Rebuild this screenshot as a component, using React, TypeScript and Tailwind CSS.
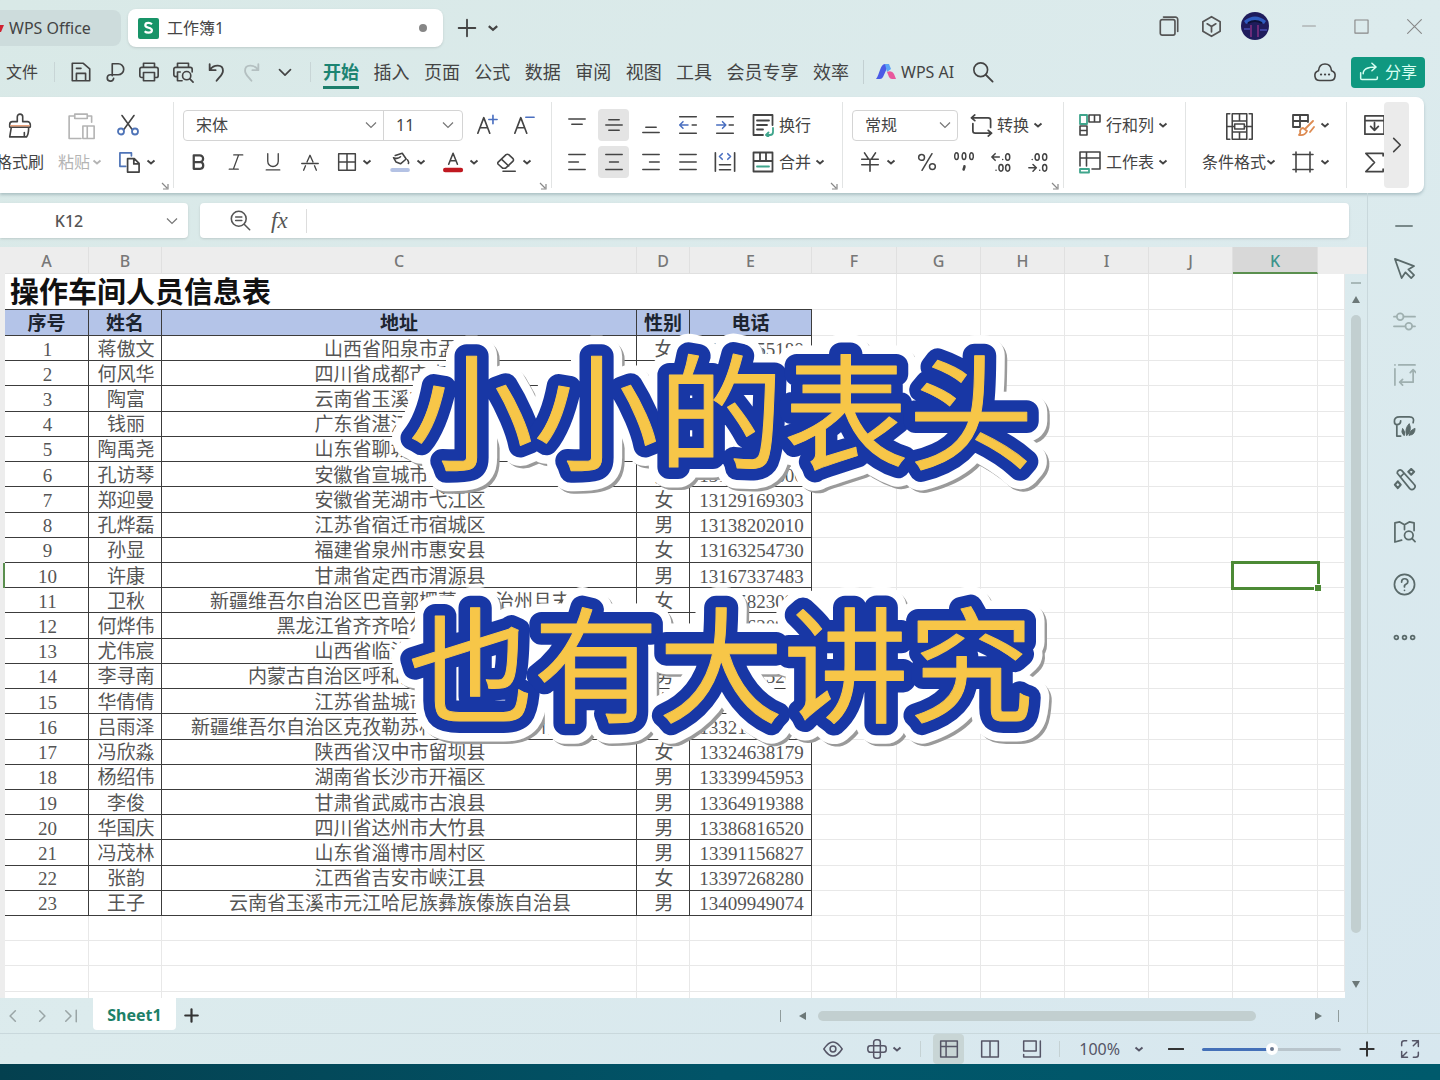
import { ReactNode, useState } from "react";
import clsx from "clsx";

type IconProps = { size?: number; className?: string; children: ReactNode };

const Icon = ({ size = 22, className, children }: IconProps) => (
  <svg
    width={size}
    height={size}
    viewBox="0 0 24 24"
    fill="none"
    stroke="currentColor"
    strokeWidth="1.8"
    strokeLinecap="round"
    strokeLinejoin="round"
    aria-hidden="true"
    className={clsx("shrink-0", className)}
  >
    {children}
  </svg>
);

const Chevron = ({ size = 10 }: { size?: number }) => (
  <svg
    width={size}
    height={size}
    viewBox="0 0 10 10"
    fill="none"
    stroke="currentColor"
    strokeWidth="1.9"
    className="shrink-0"
    aria-hidden="true"
  >
    <path d="M1.5 3.5 5 6.5 8.5 3.5" />
  </svg>
);

const WideChevron = ({ className }: { className?: string }) => (
  <svg
    width="12"
    height="12"
    viewBox="0 0 12 12"
    fill="none"
    stroke="#777"
    strokeWidth="1.2"
    className={clsx("pointer-events-none", className)}
    aria-hidden="true"
  >
    <path d="M1 3.5 6 8.5 11 3.5" />
  </svg>
);

type ToolProps = {
  label: string;
  className?: string;
  active?: boolean;
  children: ReactNode;
};

// square ribbon button, 37px pitch
const Tool = ({ label, className, active, children }: ToolProps) => (
  <button
    type="button"
    aria-label={label}
    className={clsx(
      "mx-[3px] flex h-8 w-[31px] items-center justify-center rounded",
      active && "bg-[#e4e4e4]",
      className
    )}
  >
    {children}
  </button>
);

// icon with a drop-down arrow
const DropTool = ({ label, className, children }: ToolProps) => (
  <button
    type="button"
    aria-label={label}
    className={clsx("flex h-8 items-center gap-[5px]", className)}
  >
    {children}
    <Chevron />
  </button>
);

const Launcher = () => (
  <button type="button" aria-label="更多设置" className="mr-1 mt-1 self-end text-[#888]">
    <svg width="8" height="8" viewBox="0 0 8 8" fill="none" stroke="currentColor" strokeWidth="1.2">
      <path d="M1 1l5 5M7 2v5H2" />
    </svg>
  </button>
);

type GroupProps = { className?: string; launcher?: boolean; children: ReactNode };

const Group = ({ className, launcher, children }: GroupProps) => (
  <div
    className={clsx(
      "flex shrink-0 flex-col border-r border-[#e2e4e4]",
      className
    )}
  >
    <div className="mt-[7px] flex flex-col gap-[5px]">{children}</div>
    {launcher ? <Launcher /> : null}
  </div>
);

const menus = ["开始", "插入", "页面", "公式", "数据", "审阅", "视图", "工具", "会员专享", "效率"];

const people = [
  ["蒋傲文", "山西省阳泉市盂县", "女", "13101655188"],
  ["何风华", "四川省成都市青羊区", "女", "13104472906"],
  ["陶富", "云南省玉溪市红塔区", "男", "13108265317"],
  ["钱丽", "广东省湛江市霞山区", "女", "13112590846"],
  ["陶禹尧", "山东省聊城市茌平区", "男", "13117734625"],
  ["孔访琴", "安徽省宣城市宣州区", "女", "13122841606"],
  ["郑迎曼", "安徽省芜湖市弋江区", "女", "13129169303"],
  ["孔烨磊", "江苏省宿迁市宿城区", "男", "13138202010"],
  ["孙显", "福建省泉州市惠安县", "女", "13163254730"],
  ["许康", "甘肃省定西市渭源县", "男", "13167337483"],
  ["卫秋", "新疆维吾尔自治区巴音郭楞蒙古自治州且末县", "女", "13175823096"],
  ["何烨伟", "黑龙江省齐齐哈尔市昂昂溪区", "男", "13184620975"],
  ["尤伟宸", "山西省临汾市尧都区", "男", "13196037428"],
  ["李寻南", "内蒙古自治区呼和浩特市土默特左旗", "男", "13303815264"],
  ["华倩倩", "江苏省盐城市亭湖区", "女", "13312758640"],
  ["吕雨泽", "新疆维吾尔自治区克孜勒苏柯尔克孜自治州乌恰县", "男", "13321640957"],
  ["冯欣淼", "陕西省汉中市留坝县", "女", "13324638179"],
  ["杨绍伟", "湖南省长沙市开福区", "男", "13339945953"],
  ["李俊", "甘肃省武威市古浪县", "男", "13364919388"],
  ["华国庆", "四川省达州市大竹县", "男", "13386816520"],
  ["冯茂林", "山东省淄博市周村区", "男", "13391156827"],
  ["张韵", "江西省吉安市峡江县", "女", "13397268280"],
  ["王子", "云南省玉溪市元江哈尼族彝族傣族自治县", "男", "13409949074"],
];

const columns = [
  { name: "A", width: "w-[84px]" },
  { name: "B", width: "w-[73px]" },
  { name: "C", width: "w-[475px]" },
  { name: "D", width: "w-[53px]" },
  { name: "E", width: "w-[122px]" },
  { name: "F", width: "w-[85px]" },
  { name: "G", width: "w-[84px]" },
  { name: "H", width: "w-[84px]" },
  { name: "I", width: "w-[84px]" },
  { name: "J", width: "w-[84px]" },
  { name: "K", width: "w-[85px]" },
];

const TitleBar = () => (
  <header className="flex h-[50px] shrink-0 items-center pt-1.5 text-[#444]">
    <button
      type="button"
      className="flex h-9 w-[121px] items-center gap-[5px] rounded-r-lg bg-[#cddcdc] text-base"
    >
      <svg width="4" height="10" viewBox="0 0 4 10" aria-hidden="true">
        <path d="M0 2h4L1 9H0z" fill="#d02030" />
      </svg>
      WPS Office
    </button>
    <div className="ml-[7px] flex h-[38px] w-[315px] items-center rounded-lg bg-white pl-2.5 pr-4 shadow-sm">
      <svg width="21" height="21" viewBox="0 0 21 21" aria-hidden="true">
        <rect width="21" height="21" rx="2" fill="#189468" />
        <path
          d="M14 6.2c-1-.9-2.200-1.300-3.500-1.300-2 0-3.200 1-3.200 2.300 0 3.400 6.600 1.700 6.600 5 0 1.500-1.300 2.500-3.400 2.500-1.500 0-2.900-.5-3.800-1.500"
          fill="none"
          stroke="#fff"
          strokeWidth="2.200"
        />
      </svg>
      <span className="ml-2 flex-1 text-base">工作簿1</span>
      <span className="h-2 w-2 rounded-full bg-[#868686]" />
    </div>
    <button type="button" aria-label="新建标签" className="ml-3.5">
      <Icon size={20}>
        <path d="M12 2v20M2 12h20" strokeWidth="2.200" />
      </Icon>
    </button>
    <button type="button" aria-label="标签列表" className="ml-2.5">
      <Chevron size={12} />
    </button>
    <div className="mb-1 ml-auto flex items-center pr-[18px] text-[#555]">
      <button type="button" aria-label="工作区" className="mr-5">
        <Icon size={22}>
          <rect x="2.500" y="5" width="16" height="17" rx="2" />
          <path d="M6 2.300h13a2.500 2.500 0 0 1 2.500 2.500V18" />
        </Icon>
      </button>
      <button type="button" aria-label="应用" className="mr-[18px]">
        <Icon size={23}>
          <path d="M12 1.800 21 7v10l-9 5.200L3 17V7zM7.500 9.200 12 12l4.500-2.800M12 12v5.500" />
        </Icon>
      </button>
      <button type="button" aria-label="账户" className="mr-[33px]">
        <svg width="28" height="28" viewBox="0 0 28 28">
          <circle cx="14" cy="14" r="14" fill="#1f1c5c" />
          <path d="M3 9q11-9 22 0l-2 3q-9-6-18 0z" fill="#2f5cc0" />
          <path d="M7 11q7-4 14 0" stroke="#0d1238" strokeWidth="2" fill="none" />
          <path d="M10 13v12M17 13v12" stroke="#6b2a78" strokeWidth="2" />
          <path d="M3 17h6M19 18h7" stroke="#3b3f9b" strokeWidth="2" />
        </svg>
      </button>
      <button type="button" aria-label="最小化" className="mr-[38px] text-[#999]">
        <Icon size={14}>
          <path d="M1 12h22" />
        </Icon>
      </button>
      <button type="button" aria-label="最大化" className="mr-[38px] text-[#888]">
        <Icon size={15}>
          <rect x="1.500" y="1.500" width="21" height="21" />
        </Icon>
      </button>
      <button type="button" aria-label="关闭" className="text-[#888]">
        <Icon size={15}>
          <path d="M1 1l22 22M23 1 1 23" />
        </Icon>
      </button>
    </div>
  </header>
);

const MenuBar = () => {
  const [current, setCurrent] = useState("开始");

  return (
    <div className="flex h-[47px] shrink-0 items-center pb-[3px] text-[#444]">
      <button type="button" className="ml-1.5 text-base">
        文件
      </button>
      <span className="ml-4 mr-[15px] h-5 w-px bg-[#c8d5d6]" />
      <div className="flex items-center gap-3">
        <button type="button" aria-label="保存">
          <Icon>
            <path d="M2.500 2.500h12l7 6V21.500h-19zM7 21v-7.500h10V21M7 8h5" />
          </Icon>
        </button>
        <button type="button" aria-label="输出为PDF">
          <Icon>
            <path d="M9 16V3h6.500a5.500 5.500 0 0 1 0 12H7a3.500 3.500 0 1 0 3.500 4" />
          </Icon>
        </button>
        <button type="button" aria-label="打印">
          <Icon>
            <path d="M6 7V2.500h12V7M5.500 18H4a2 2 0 0 1-2-2V9a2 2 0 0 1 2-2h16a2 2 0 0 1 2 2v7a2 2 0 0 1-2 2h-1.500M6 12.500h12v9H6z" />
          </Icon>
        </button>
        <button type="button" aria-label="打印预览">
          <Icon>
            <path d="M6 7V2.500h12V7M5 17H4a2 2 0 0 1-2-2V9a2 2 0 0 1 2-2h16a2 2 0 0 1 2 2v3M9 12H6v9.500h5" />
            <circle cx="16" cy="16" r="4.500" />
            <path d="m19.500 19.500 3.500 3.500" />
          </Icon>
        </button>
        <button type="button" aria-label="撤销">
          <Icon>
            <path d="M4 3.500V10h6.500M4.500 9.500c4-6 14-6 14 1 0 4-3 6-7 11" strokeWidth="2" />
          </Icon>
        </button>
        <button type="button" aria-label="恢复" className="text-[#b4c0c1]">
          <Icon>
            <path d="M20 3.500V10h-6.500M19.500 9.500c-4-6-14-6-14 1 0 4 3 6 7 11" strokeWidth="2" />
          </Icon>
        </button>
        <button type="button" aria-label="更多命令">
          <Icon>
            <path d="m6 9.500 6 6 6-6" />
          </Icon>
        </button>
      </div>
      <span className="ml-3.5 mr-3 h-5 w-px bg-[#c8d5d6]" />
      <nav className="flex w-[526px] items-center justify-between text-lg leading-6">
        {menus.map((name) => (
          <button
            type="button"
            key={name}
            onClick={() => setCurrent(name)}
            className={clsx(
              "border-b-[3px] pb-0.5 pt-[5px] whitespace-nowrap",
              name === current
                ? "border-[#1c7d6b] font-bold text-[#1c8472]"
                : "border-transparent"
            )}
          >
            {name}
          </button>
        ))}
      </nav>
      <span className="ml-3.5 mr-3 h-6 w-px bg-[#c3d0d2]" />
      <button type="button" className="flex items-center gap-1 text-base">
        <svg width="21" height="18" viewBox="0 0 21 18" aria-hidden="true">
          <path d="M0 16C4 11 4 1 9 1h4L7 14q-1 2-3 2z" fill="#4a5be6" />
          <path d="M9 1h4l2 5-4 3z" fill="#5ba4f5" />
          <path d="M11 9q5-2 7 2l2 5h-4q-2 0-3-2z" fill="#e8589c" />
        </svg>
        WPS AI
      </button>
      <button type="button" aria-label="搜索" className="ml-[18px]">
        <Icon size={22}>
          <circle cx="9.500" cy="9.500" r="7.500" />
          <path d="m15 15 7.500 7.500" strokeWidth="2" />
        </Icon>
      </button>
      <button type="button" aria-label="云端" className="ml-auto">
        <Icon size={24}>
          <path d="M7 20.500a5 5 0 0 1-1.500-9.800C6 6 9 4 12 4s6 2 6.500 6.700A5 5 0 0 1 17 20.500z" strokeWidth="1.600" />
          <path d="M8 14.500h.1M12 14.500h.1M16 14.500h.1" strokeWidth="2.200" />
        </Icon>
      </button>
      <button
        type="button"
        className="ml-3.5 mr-[15px] flex h-[31px] w-[74px] items-center justify-center gap-1.5 rounded bg-[#109880] text-base text-[#d8fff2]"
      >
        <Icon size={20}>
          <path d="M2 13v6.500a1.500 1.500 0 0 0 1.500 1.500h17a1.500 1.500 0 0 0 1.500-1.500V18M5 14c0-6 6-8 15-8M15.500 1.500 20.500 6l-5 4.500" />
        </Icon>
        分享
      </button>
    </div>
  );
};

const Ribbon = () => (
  <div className="mr-4 flex h-24 shrink-0 overflow-hidden rounded-r-lg bg-white py-[5px] text-base text-[#444] shadow-[0_2px_3px_rgba(90,120,130,0.35)]">
    <Group className="w-[174px]" launcher>
      <div className="flex">
        <button type="button" className="flex w-[44px] flex-col items-end">
          <span className="flex h-[37px] w-[47px] items-start pl-2.5">
            <Icon size={26} className="mt-1">
              <path d="M9.500 8V3.500a2.500 2.500 0 0 1 5 0V8H19a2.500 2.500 0 0 1 2.500 2.500V13h-19v-2.500A2.500 2.500 0 0 1 5 8zM4 13 2.500 22H18q2-2 2-9M16 18v4" strokeWidth="1.500" />
              <path d="M3.500 11.800h17" stroke="#e8a07a" strokeWidth="1.300" />
            </Icon>
          </span>
          <span className="leading-8 whitespace-nowrap">格式刷</span>
        </button>
        <button type="button" className="ml-3.5 flex w-[46px] flex-col text-[#b4b4b4]">
          <span className="flex h-[37px] items-start pl-2">
            <Icon size={30} className="mt-0.5">
              <path d="M7 4H2.500v18H12M17 4h3.500v5M7 2.500h10V6H7zM13.500 12h9v10h-9zM17 12v10" strokeWidth="1.300" />
            </Icon>
          </span>
          <span className="flex items-center gap-0.5 leading-8 whitespace-nowrap">
            粘贴 <Chevron />
          </span>
        </button>
        <div className="ml-3 flex flex-col gap-[5px]">
          <button type="button" aria-label="剪切" className="flex h-8 items-center">
            <Icon size={24}>
              <path d="M6 2.500 16.500 17M18 2.500 7.500 17" strokeWidth="1.600" />
              <circle cx="5" cy="18.500" r="3" stroke="#4f74b8" />
              <circle cx="19" cy="18.500" r="3" stroke="#4f74b8" />
            </Icon>
          </button>
          <DropTool label="复制" className="ml-0.5">
            <Icon size={23}>
              <path d="M8 16H2V2h12v3" stroke="#4f74b8" />
              <path d="M10 8h7l5 5v9H10zM16.500 8v5.500H22" />
            </Icon>
          </DropTool>
        </div>
      </div>
    </Group>

    <Group className="w-[378px]" launcher>
      <div className="ml-[9px] flex h-8 items-center">
        <div className="flex h-[31px] items-center rounded border border-[#d4d4d4]">
          <label className="relative flex h-full w-[200px] items-center border-r border-[#d4d4d4]">
            <select aria-label="字体" className="h-full w-full appearance-none pl-3 outline-none">
              <option>宋体</option>
              <option>黑体</option>
            </select>
            <WideChevron className="absolute right-1.5" />
          </label>
          <label className="relative flex h-full w-[78px] items-center">
            <select aria-label="字号" className="h-full w-full appearance-none pl-3 outline-none">
              <option>11</option>
              <option>12</option>
            </select>
            <WideChevron className="absolute right-2" />
          </label>
        </div>
        <Tool label="增大字号" className="ml-2">
          <Icon size={22}>
            <path d="m2 21 6.500-17L15 21M4.500 15h8" />
            <path d="M18.500 1.500v9M14 6h9" stroke="#4a6fc0" />
          </Icon>
        </Tool>
        <Tool label="减小字号">
          <Icon size={22}>
            <path d="m2 21 6.500-17L15 21M4.500 15h8" />
            <path d="M14 3.500h9" stroke="#4a6fc0" />
          </Icon>
        </Tool>
      </div>
      <div className="ml-1.5 flex">
        <Tool label="加粗">
          <Icon size={18}>
            <path d="M5 3h8a4.400 4.400 0 0 1 0 9H5zM5 12h9a4.600 4.600 0 0 1 0 9H5z" strokeWidth="3" />
          </Icon>
        </Tool>
        <Tool label="倾斜">
          <Icon size={18}>
            <path d="M9 2.500h12M3 21.500h12M15.500 2.500l-7 19" />
          </Icon>
        </Tool>
        <Tool label="下划线">
          <Icon size={18}>
            <path d="M5 1v10a7 7 0 0 0 14 0V1M3 22.500h18" />
          </Icon>
        </Tool>
        <Tool label="删除线">
          <Icon size={18}>
            <path d="M8 12 12 3l4 9M1 14h22M6 17l-2.500 6M18 17l2.500 6" />
          </Icon>
        </Tool>
        <DropTool label="边框" className="w-[53px] pl-[9px]">
          <Icon size={20}>
            <path d="M2 2h20v20H2zM12 2v20M2 12h20" />
          </Icon>
        </DropTool>
        <DropTool label="填充颜色" className="w-[53px] pl-[9px]">
          <Icon size={21}>
            <path d="M6 4 14 1.500 18.500 8 12 13.500 7 11.500 4 6.500q5 2 8-1M20 9q2 3 1 4" />
            <path d="M2.500 20.500h18" stroke="#b4c2e4" strokeWidth="4.500" />
          </Icon>
        </DropTool>
        <DropTool label="字体颜色" className="w-[53px] pl-[9px]">
          <Icon size={21}>
            <path d="m6.500 14 5-12.500 5 12.500M8 10h7" />
            <path d="M2.500 20.500h18" stroke="#c01820" strokeWidth="5" />
          </Icon>
        </DropTool>
        <DropTool label="清除" className="w-[53px] pl-[9px]">
          <Icon size={21}>
            <path d="m7.500 18.500-5-4.500a2 2 0 0 1 0-2.500l9-8.500q1.500-1 3 0l5 4.500q1 1.500 0 3l-8.500 8zM6.500 8.500l8 7.500M8 22h14" />
          </Icon>
        </DropTool>
      </div>
    </Group>

    <Group className="w-[291px]" launcher>
      <div className="ml-1.5 flex">
        <Tool label="顶端对齐">
          <Icon size={18}>
            <path d="M1 4h22M5 11h14" />
          </Icon>
        </Tool>
        <Tool label="垂直居中" active>
          <Icon size={18}>
            <path d="M5 5h14M1 12h22M5 19h14" />
          </Icon>
        </Tool>
        <Tool label="底端对齐">
          <Icon size={18}>
            <path d="M5 15h14M1 22h22" />
          </Icon>
        </Tool>
        <Tool label="减少缩进">
          <Icon size={20}>
            <path d="M2 2h20M17 12h5M2 22h20" />
            <path d="M12 12H2m4-4-4 4 4 4" stroke="#4a6fc0" />
          </Icon>
        </Tool>
        <Tool label="增加缩进">
          <Icon size={20}>
            <path d="M2 2h20M17 12h5M2 22h20" />
            <path d="M2 12h11m-4-4 4 4-4 4" stroke="#4a6fc0" />
          </Icon>
        </Tool>
        <button type="button" className="ml-2 flex items-center gap-1 whitespace-nowrap">
          <Icon size={24}>
            <path d="M21.500 12V2h-19v20H12M6 7.500h12M6 12h10M6 16.500h6" />
            <path d="M22 15v4q0 3-3 3h-3m1.500-2.500L15 22l2.500 2" stroke="#3fa58c" />
          </Icon>
          换行
        </button>
      </div>
      <div className="ml-1.5 flex">
        <Tool label="左对齐">
          <Icon size={18}>
            <path d="M1 2h22M1 12h13M1 22h22" />
          </Icon>
        </Tool>
        <Tool label="水平居中" active>
          <Icon size={18}>
            <path d="M1 2h22M6 12h12M1 22h22" />
          </Icon>
        </Tool>
        <Tool label="右对齐">
          <Icon size={18}>
            <path d="M1 2h22M10 12h13M1 22h22" />
          </Icon>
        </Tool>
        <Tool label="两端对齐">
          <Icon size={18}>
            <path d="M1 2h22M1 12h22M1 22h22" />
          </Icon>
        </Tool>
        <Tool label="分散对齐">
          <Icon size={22}>
            <path d="M1.500 2v20M22.500 2v20M6 15h12M6 20.500h12" />
            <path d="M9 3 6 6l3 3M15 3l3 3-3 3" stroke="#4a6fc0" />
          </Icon>
        </Tool>
        <button type="button" className="ml-2 flex items-center gap-1 whitespace-nowrap">
          <Icon size={24}>
            <path d="M2.500 2.500h19v19h-19zM2.500 11h19M9 2.500V11M15 2.500V11" />
            <path d="M6 16.500h12" stroke="#3fa58c" />
          </Icon>
          合并 <Chevron />
        </button>
      </div>
    </Group>

    <Group className="w-[221px]" launcher>
      <div className="ml-[9px] flex h-8 items-center">
        <label className="relative flex h-[31px] w-[106px] items-center rounded border border-[#d4d4d4]">
          <select aria-label="数字格式" className="h-full w-full appearance-none pl-3 outline-none">
            <option>常规</option>
            <option>数值</option>
          </select>
          <WideChevron className="absolute right-1.5" />
        </label>
        <button type="button" className="ml-3 flex items-center gap-1 whitespace-nowrap">
          <Icon size={23}>
            <path d="M5 1 1.500 4 5 7M2 4h17q2.500 0 2.500 2.500V14M3 10v7.500Q3 20 5.500 20H22M19 17l3.500 3-3.500 3" />
          </Icon>
          转换 <Chevron />
        </button>
      </div>
      <div className="ml-4 flex h-8 items-center">
        <DropTool label="货币" className="w-[49px]">
          <Icon size={22}>
            <path d="M6 2l4 6M18 2l-4 6M3 9h18M3 15h18M12 9v13" />
          </Icon>
        </DropTool>
        <Tool label="百分比">
          <Icon size={20}>
            <circle cx="5.500" cy="6.500" r="3.500" />
            <circle cx="18.500" cy="17.500" r="3.500" />
            <path d="M18 2 6 22" />
          </Icon>
        </Tool>
        <Tool label="千位分隔样式">
          <Icon size={20}>
            <ellipse cx="3" cy="5" rx="2.200" ry="4" />
            <ellipse cx="12" cy="5" rx="2.200" ry="4" />
            <ellipse cx="21" cy="5" rx="2.200" ry="4" />
            <path d="M12.500 17v1l-1 3" strokeWidth="3" />
          </Icon>
        </Tool>
        <Tool label="增加小数位数">
          <Icon size={20}>
            <path d="M10 6H1m4-4L1 6l4 4M14 9h.1M6 22h.1" />
            <ellipse cx="20" cy="6" rx="2.500" ry="4" />
            <ellipse cx="12" cy="19" rx="2.500" ry="4" />
            <ellipse cx="20" cy="19" rx="2.500" ry="4" />
          </Icon>
        </Tool>
        <Tool label="减少小数位数">
          <Icon size={20}>
            <path d="M1 19h9m-4-4 4 4-4 4M5 9h.1M14 22h.1" />
            <ellipse cx="11" cy="6" rx="2.500" ry="4" />
            <ellipse cx="20" cy="6" rx="2.500" ry="4" />
            <ellipse cx="20" cy="19" rx="2.500" ry="4" />
          </Icon>
        </Tool>
      </div>
    </Group>

    <Group className="w-[122px]">
      <button type="button" className="ml-3.5 flex h-8 items-center gap-1 whitespace-nowrap">
        <Icon size={24}>
          <path d="M11 2h11v7H11zM16.500 2v7M2 13h7v9H2zM2 17.500h7" strokeWidth="1.600" />
          <path d="M2 2h7v9H2z" stroke="#3fa58c" />
        </Icon>
        行和列 <Chevron />
      </button>
      <button type="button" className="ml-3.5 flex h-8 items-center gap-1 whitespace-nowrap">
        <Icon size={24}>
          <path d="M2 16V2h20v17h-8M2 8h20M8.500 2v14" strokeWidth="1.600" />
          <path d="M2 19h9v3.500H2z" stroke="#3fa58c" />
        </Icon>
        工作表 <Chevron />
      </button>
    </Group>

    <Group className="w-[161px]">
      <div className="ml-4 flex">
        <button type="button" className="flex flex-col items-center">
          <span className="flex h-[37px] items-start pt-[3px]">
            <Icon size={29}>
              <path d="M4 1.500H1.500v21H4M20 1.500h2.500v21H20M6 1.500h12v6H6zM6 16.500h12v6H6zM6 7.500v9M18 7.500v9M1.500 12H8M16 12h6.500M8 10h8v4H8zM12 1.500v6M12 16.500v6" strokeWidth="1.300" />
            </Icon>
          </span>
          <span className="flex items-center leading-8 whitespace-nowrap">
            条件格式 <Chevron />
          </span>
        </button>
        <div className="ml-3.5 flex flex-col gap-[5px]">
          <DropTool label="表格样式" className="ml-px">
            <Icon size={24}>
              <path d="M9 14H2V2h15v7M2 8h14M9 2v12" />
              <path d="m22 8-8 8M12 15l4 3q-2 5-8 4 2-2 1-4 1-3 3-3zM23 14l-4 5" stroke="#dd8b52" />
            </Icon>
          </DropTool>
          <DropTool label="单元格格式" className="ml-px">
            <Icon size={24}>
              <path d="M5 2v20M19 2v20M2 4.500h20M2 19.500h20" strokeWidth="1.600" />
            </Icon>
          </DropTool>
        </div>
      </div>
    </Group>

    <div className="mt-[7px] flex w-[37px] shrink-0 flex-col gap-[5px] overflow-hidden pl-4">
      <button type="button" aria-label="填充" className="flex h-8 items-center">
        <Icon size={23}>
          <path d="M2 2h20v5H2zM5 7H2v14h20V7M12 9v8m-4-4 4 4 4-4" />
        </Icon>
      </button>
      <button type="button" aria-label="求和" className="flex h-8 items-center">
        <Icon size={23}>
          <path d="M21 5V2.500H3L12 12l-9 9.500h18V19" />
        </Icon>
      </button>
    </div>
    <button
      type="button"
      aria-label="展开功能区"
      className="flex w-[25px] shrink-0 items-center justify-center rounded bg-[#ebebeb]"
    >
      <Icon size={16}>
        <path d="m7 2 10 10L7 22" strokeWidth="2.400" />
      </Icon>
    </button>
  </div>
);

const FormulaBar = () => (
  <div className="flex h-[54px] shrink-0 gap-3 pb-[9px] pr-[18px] pt-2.5 text-[#555]">
    <label className="relative flex w-[188px] items-center rounded-r bg-white shadow-sm">
      <input
        aria-label="名称框"
        defaultValue="K12"
        className="h-full w-full pr-[50px] text-center text-base font-medium outline-none"
      />
      <WideChevron className="absolute right-2.5" />
    </label>
    <div className="flex flex-1 items-center rounded bg-white pl-[30px] shadow-sm">
      <button type="button" aria-label="浏览公式结果">
        <Icon size={21}>
          <circle cx="10" cy="10" r="8.500" />
          <path d="m16.500 16.500 6 6M6.500 8h7M6.500 12h7" />
        </Icon>
      </button>
      <button
        type="button"
        aria-label="插入函数"
        className="ml-5 font-['Liberation_Serif',serif] text-[23px] leading-6 italic"
      >
        fx
      </button>
      <span className="ml-[18px] h-6 w-px bg-[#ddd]" />
      <input aria-label="编辑栏" className="h-full min-w-0 flex-1 px-2 outline-none" />
    </div>
  </div>
);

const Sheet = () => {
  const dark = "border-r border-b border-[#3c3c3c]";
  const light = "border-r border-b border-[#e8e8e8]";
  const blanks = ["F", "G", "H", "I", "J", "K", "L"];

  return (
    <div className="flex min-h-0 flex-1">
      <div className="min-w-0 flex-1 overflow-hidden bg-white">
        <table className="h-full w-full table-fixed border-separate border-spacing-0 text-center font-['Liberation_Serif','Noto_Sans_CJK_SC',serif] text-[19px] leading-5 text-[#555]">
          <colgroup>
            <col className="w-[5px]" />
            {columns.map((col) => (
              <col key={col.name} className={col.width} />
            ))}
            <col />
          </colgroup>
          <thead className="font-['Noto_Sans',sans-serif] text-base leading-5 text-[#777]">
            <tr className="h-[27px] bg-[#ededed]">
              <th className="p-0" />
              {columns.map((col) => (
                <th
                  key={col.name}
                  scope="col"
                  className={clsx(
                    "border-r border-b border-[#e0e0e0] p-0 pt-0.5 font-medium",
                    col.name === "K" && "border-b-2 border-b-[#5a8f4e] bg-[#d8d8d8] text-[#3c948c]"
                  )}
                >
                  {col.name}
                </th>
              ))}
              <th className="p-0" />
            </tr>
          </thead>
          <tbody>
            <tr className="h-9">
              <td className="bg-[#ededed] p-0" />
              <td
                colSpan={5}
                className="border-b border-[#3c3c3c] p-0 pl-[5px] pt-[3px] text-left text-[29px] leading-8 font-bold text-[#111]"
              >
                操作车间人员信息表
              </td>
              {blanks.map((name) => (
                <td key={name} className={clsx(light, "p-0")} />
              ))}
            </tr>
            <tr className="h-[26px] text-[#1d2430]">
              <td className="bg-[#ededed] p-0" />
              {["序号", "姓名", "地址", "性别", "电话"].map((name) => (
                <th key={name} scope="col" className={clsx(dark, "bg-[#b4c4e8] p-0 pt-[3px] font-bold")}>
                  {name}
                </th>
              ))}
              {blanks.map((name) => (
                <td key={name} className={clsx(light, "p-0")} />
              ))}
            </tr>
            {people.map((person, i) => (
              <tr key={person[0]}>
                <td
                  className={clsx(
                    "bg-[#ededed] p-0",
                    i === 9 && "border-r-2 border-[#5a8f4e]"
                  )}
                />
                <td className={clsx(dark, "p-0 pt-[3px] pl-0.5")}>{i + 1}</td>
                {person.map((value, j) => (
                  <td key={j} className={clsx(dark, "p-0 pt-[3px] pl-0.5 whitespace-nowrap")}>
                    {value}
                  </td>
                ))}
                {blanks.map((name) => (
                  <td
                    key={name}
                    className={clsx(
                      light,
                      "p-0",
                      i === 9 && name === "K" && "relative outline-3 -outline-offset-1 outline-[#4c8a35]"
                    )}
                  >
                    {i === 9 && name === "K" ? (
                      <span className="absolute -right-1 -bottom-1 h-[7px] w-[7px] border-t border-l border-white bg-[#4c8a35]" />
                    ) : null}
                  </td>
                ))}
              </tr>
            ))}
            {[0, 1, 2].map((row) => (
              <tr key={row}>
                <td className="bg-[#ededed] p-0" />
                {columns.map((col) => (
                  <td key={col.name} className={clsx(light, "p-0 pt-[3px]")}>
                    &nbsp;
                  </td>
                ))}
                <td className={clsx(light, "p-0")} />
              </tr>
            ))}
            <tr className="h-1.5">
              <td className="bg-[#ededed] p-0" />
              {columns.map((col) => (
                <td key={col.name} className="border-r border-[#e8e8e8] p-0" />
              ))}
              <td className="p-0" />
            </tr>
          </tbody>
        </table>
      </div>
      <div className="flex w-[22px] shrink-0 flex-col items-center text-[#6c7878]">
        <div className="h-[27px] w-full shrink-0 bg-[#ededed]" />
        <span className="mt-2 h-0.5 w-2.5 bg-[#a8b8b8]" />
        <span className="mt-3 h-0 w-0 border-x-4 border-b-7 border-x-transparent border-b-[#6c7878]" />
        <div className="mt-3 w-2.5 flex-1 rounded-full bg-[#c2cfd0]" />
        <span className="mt-12 mb-2.5 h-0 w-0 border-x-4 border-t-7 border-x-transparent border-t-[#6c7878]" />
      </div>
    </div>
  );
};

const SheetTabs = () => (
  <div className="flex h-[35px] shrink-0 text-[#9aa5a6]">
    <div className="flex items-center gap-[15px] pl-1.5">
      <button type="button" aria-label="上一个">
        <Icon size={14}>
          <path d="M16 3 7 12l9 9" strokeWidth="2.600" />
        </Icon>
      </button>
      <button type="button" aria-label="下一个">
        <Icon size={14}>
          <path d="m8 3 9 9-9 9" strokeWidth="2.600" />
        </Icon>
      </button>
      <button type="button" aria-label="最后一个">
        <Icon size={14}>
          <path d="m3 3 9 9-9 9M21 2v20" strokeWidth="2.600" />
        </Icon>
      </button>
    </div>
    <button
      type="button"
      className="ml-[15px] h-8 w-[83px] rounded-b bg-white pt-0.5 text-base font-bold text-[#1c8068]"
    >
      Sheet1
    </button>
    <button type="button" aria-label="新建工作表" className="ml-2 text-[#333]">
      <Icon size={15}>
        <path d="M12 2v20M2 12h20" strokeWidth="3.500" />
      </Icon>
    </button>
    <div className="ml-auto flex w-[587px] items-center pr-7">
      <span className="h-3 w-px bg-[#909c9c]" />
      <span className="ml-[18px] h-0 w-0 border-y-4 border-r-7 border-y-transparent border-r-[#6c7878]" />
      <span className="ml-3 h-2.5 w-[438px] rounded-full bg-[#c2cfd0]" />
      <span className="ml-auto h-0 w-0 border-y-4 border-l-7 border-y-transparent border-l-[#6c7878]" />
      <span className="ml-4 h-3 w-px bg-[#909c9c]" />
    </div>
  </div>
);

const SideBar = () => (
  <aside className="flex w-[73px] shrink-0 flex-col items-center border-l border-[#c9d8dc] text-[#5a6a6a]">
    <button type="button" aria-label="收起" className="flex h-[49px] items-center pt-4">
      <Icon size={18}>
        <path d="M1 12h22" />
      </Icon>
    </button>
    <button type="button" aria-label="选择" className="flex h-[53px] items-center">
      <Icon size={23}>
        <path d="M2 2 9 22l4-6 6 6 3-3-6-6 6-3.500z" />
      </Icon>
    </button>
    <button type="button" aria-label="属性" className="flex h-[53px] items-center text-[#9fb0b0]">
      <Icon size={23}>
        <path d="M1 7h3M11 7h12M1 17h12M20 17h3" />
        <circle cx="7.500" cy="7" r="3.500" />
        <circle cx="16.500" cy="17" r="3.500" />
      </Icon>
    </button>
    <button type="button" aria-label="转换" className="flex h-[52px] items-center text-[#9fb0b0]">
      <Icon size={23}>
        <path d="M2 6v17M6 2h17M2 2h.1M21 7v13H7m11-10 3-3 3 3M10 17l-3 3 3 3" />
      </Icon>
    </button>
    <button type="button" aria-label="主题" className="flex h-[53px] items-center">
      <Icon size={23}>
        <path d="M21 8q2-6-4-6H7Q1 2 1.500 7q0 3 2.500 3v12h4M4 10q4 0 4-4" />
        <path d="M11 21q-3-3-1-7 3 3 2 7zM14 21q-2-7 3-12 3 7-2 12zM17 21q0-5 6-7 0 7-6 7z" fill="currentColor" strokeWidth="1" />
      </Icon>
    </button>
    <button type="button" aria-label="美化" className="flex h-[52px] items-center">
      <Icon size={23}>
        <path d="M4.500 5.500a3 3 0 0 1 4.500-3L22 17a3 3 0 0 1-4.500 4.500zM8 9l3-3" />
        <path d="m19 1 3 3-3 3-3-3zM5 14l3 3.500-3 3.500-3-3.500z" strokeWidth="2.200" />
      </Icon>
    </button>
    <button type="button" aria-label="查找" className="flex h-[53px] items-center">
      <Icon size={23}>
        <path d="M9 21 2 23V3l5-1 5 3 5-3 5 1v8M12 5v5" />
        <circle cx="16.500" cy="16" r="4.500" />
        <path d="m20 19.500 3 3" />
      </Icon>
    </button>
    <button type="button" aria-label="帮助" className="flex h-[53px] items-center">
      <Icon size={23}>
        <circle cx="12" cy="12" r="10.500" />
        <path d="M9 9.500q0-3.500 3.200-3.500T15.500 9q0 1.800-2 2.800T12 14.500M12 18v.1" />
      </Icon>
    </button>
    <button type="button" aria-label="更多" className="flex h-[53px] items-center">
      <Icon size={23}>
        <circle cx="3.500" cy="12" r="2" />
        <circle cx="12" cy="12" r="2" />
        <circle cx="20.500" cy="12" r="2" />
      </Icon>
    </button>
  </aside>
);

const StatusBar = () => {
  const [zoom, setZoom] = useState(50);

  return (
    <footer className="flex h-[31px] shrink-0 items-center justify-end border-t border-[#c9d8dc] pr-5 text-[#556]">
      <button type="button" aria-label="护眼模式">
        <Icon size={20}>
          <path d="M1 12q11-17 22 0-11 17-22 0z" />
          <circle cx="12" cy="12" r="3.500" />
        </Icon>
      </button>
      <DropTool label="阅读模式" className="ml-6">
        <Icon size={20}>
          <rect x="8" y="1" width="8" height="22" rx="3" />
          <rect x="1" y="8" width="22" height="8" rx="3" />
        </Icon>
      </DropTool>
      <span className="ml-[18px] mr-3 h-4 w-px bg-[#c5d2d4]" />
      <button
        type="button"
        aria-label="普通视图"
        className="flex h-[30px] w-[31px] items-center justify-center rounded bg-[#c8d5d5]"
      >
        <Icon size={20}>
          <path d="M2 2.500h20v19H2zM2 9h20M8.500 2.500v19" />
        </Icon>
      </button>
      <button type="button" aria-label="页面布局" className="ml-4">
        <Icon size={20}>
          <path d="M2 2.500h20v19H2zM12 2.500v19" />
        </Icon>
      </button>
      <button type="button" aria-label="分页预览" className="ml-[22px]">
        <Icon size={20}>
          <path d="M2 2.500h15v12H2zM22 2.500v19H2v-3" />
        </Icon>
      </button>
      <span className="ml-[17px] mr-[19px] h-4 w-px bg-[#c5d2d4]" />
      <button type="button" className="flex items-center gap-3.5 text-base">
        100% <Chevron />
      </button>
      <button type="button" aria-label="缩小" className="ml-6 text-[#333]">
        <Icon size={16}>
          <path d="M1 12h22" strokeWidth="3" />
        </Icon>
      </button>
      <input
        type="range"
        aria-label="显示比例"
        value={zoom}
        onChange={(e) => setZoom(Number(e.target.value))}
        className="mx-[18px] h-[3px] w-[139px] appearance-none rounded-full bg-linear-to-r from-[#4470b8] from-50% to-[#b9c5cc] to-50% [&::-webkit-slider-thumb]:h-3 [&::-webkit-slider-thumb]:w-3 [&::-webkit-slider-thumb]:appearance-none [&::-webkit-slider-thumb]:rounded-full [&::-webkit-slider-thumb]:border-4 [&::-webkit-slider-thumb]:border-white [&::-webkit-slider-thumb]:bg-[#6a7890]"
      />
      <button type="button" aria-label="放大" className="text-[#333]">
        <Icon size={16}>
          <path d="M12 2v20M2 12h20" strokeWidth="3" />
        </Icon>
      </button>
      <button type="button" aria-label="全屏" className="ml-[25px]">
        <Icon size={20}>
          <path d="M2 8V5q0-3 3-3h3M15 2h7v7M22 2l-6 6M22 16v3q0 3-3 3h-3M9 22H2v-7M2 22l6-6" />
        </Icon>
      </button>
    </footer>
  );
};

// sticker caption: grey shadow, white edge, blue outline, then the yellow letters
const Caption = () => (
  <div className="pointer-events-none absolute inset-x-0 top-80 flex justify-center">
    <svg
      width="680"
      height="440"
      viewBox="0 0 680 440"
      strokeLinejoin="round"
      className="font-['Noto_Sans_CJK_SC',sans-serif] text-[125px] font-normal"
    >
      <g fill="#9a9a9a" stroke="#9a9a9a" strokeWidth="40">
        <use href="#caption" x="3" y="3" />
      </g>
      <g stroke="#fff" strokeWidth="41">
        <use href="#caption" />
      </g>
      <g stroke="#1837a5" strokeWidth="24">
        <use href="#caption" />
      </g>
      <g fill="#f7c648" stroke="#f7c648" strokeWidth="1">
        <g id="caption" textAnchor="middle">
          <text x="341" y="140">小小的表头</text>
          <text x="341" y="393">也有大讲究</text>
        </g>
      </g>
    </svg>
  </div>
);

const App = () => {
  return (
    <div className="relative flex h-screen flex-col overflow-hidden bg-linear-to-br from-[#d9e9e7] via-[#dcebed] to-[#d7e7ef] font-['Noto_Sans','Noto_Sans_CJK_SC',sans-serif]">
      <TitleBar />
      <MenuBar />
      <Ribbon />
      <div className="flex min-h-0 flex-1">
        <main className="flex min-w-0 flex-1 flex-col">
          <FormulaBar />
          <Sheet />
          <SheetTabs />
        </main>
        <SideBar />
      </div>
      <StatusBar />
      <div className="h-4 shrink-0 bg-linear-to-r from-[#04404f] via-[#015468] to-[#005a6c]" />
      <Caption />
    </div>
  );
};

export default App;
